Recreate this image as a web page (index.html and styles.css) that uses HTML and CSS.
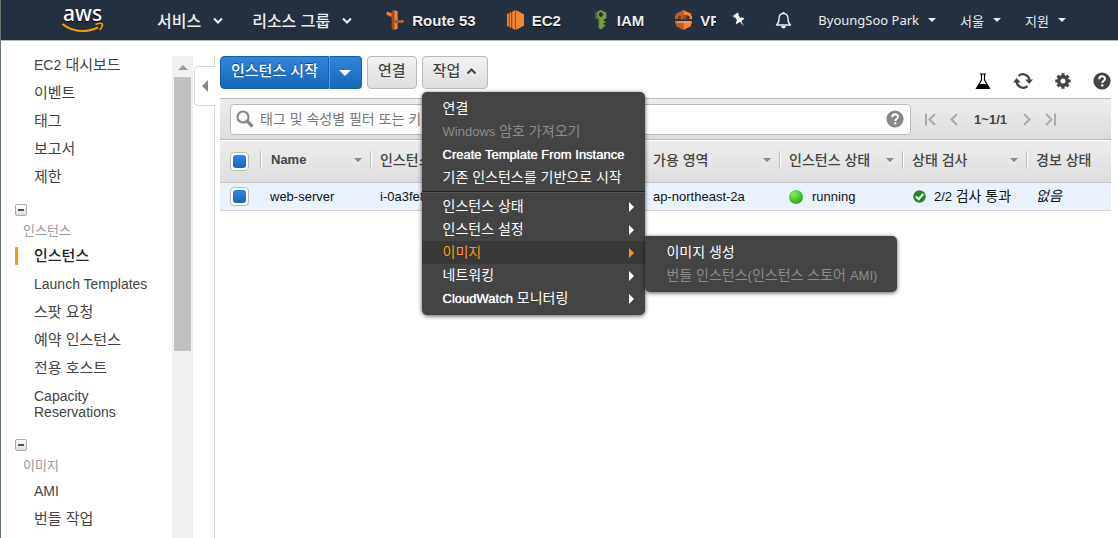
FILE: index.html
```html
<!DOCTYPE html>
<html lang="ko">
<head>
<meta charset="utf-8">
<meta name="viewport" content="width=device-width, initial-scale=1">
<title>EC2 Management Console</title>
<link rel="stylesheet" href="styles.css">
</head>
<body>
<header class="topbar">
  <a class="logo" href="#" aria-label="aws">
    <svg width="44" height="40" viewBox="0 0 44 40">
      <text class="logo-text" x="2" y="21">aws</text>
      <path d="M1.500 24c6 5 12 7 19.500 7 6 0 11-1.200 16-3.600" fill="none" stroke="#f90" stroke-width="2.200"/>
      <path d="M34.500 24.500c3-1.200 6-1.300 6.800-.6 .5 1-.5 4-2.500 6" fill="none" stroke="#f90" stroke-width="1.700"/>
    </svg>
  </a>
  <nav class="main-nav">
    <button class="nav-menu services">서비스 <svg width="10" height="7" viewBox="0 0 10 7"><path d="M1 1.500l4 4 4-4" fill="none" stroke="#eee" stroke-width="2"/></svg></button>
    <button class="nav-menu groups">리소스 그룹 <svg width="10" height="7" viewBox="0 0 10 7"><path d="M1 1.500l4 4 4-4" fill="none" stroke="#eee" stroke-width="2"/></svg></button>
  </nav>
  <nav class="shortcuts">
    <a class="shortcut route" href="#">
      <svg width="18" height="20" viewBox="0 0 54 60"><path d="M17 3l8-3v60l-8-3z" fill="#9d5025"/><path d="M25 0l10 4v52l-10 4z" fill="#f58536"/><path d="M1 6l4-1 12 5v10L5 16l-4-3 2-4z" fill="#f58536"/><path d="M0 13l17 7v2L4 17z" fill="#9d5025"/><path d="M27 30l8 2 16-1 3 4-3 4-16-1-8 2z" fill="#9d5025"/><path d="M35 32l16-1 3 4H35z" fill="#d9732e"/></svg>
      Route 53</a>
    <a class="shortcut ec2" href="#">
      <svg width="17" height="20" viewBox="0 0 51 60"><path d="M0 13l5-3v40l-5-3zM7 9l5-2v46l-5-3zM14 6l9-5v58l-9-5z" fill="#9d5025"/><path d="M0 13l5-3v40l-5-3zM8 8l5-2v48l-5-2zM16 5l8-4v58l-8-4z" fill="#f58536"/><path d="M26 0l25 13v34L26 60z" fill="#f58536"/><path d="M24 1l2-1v60l-2-1z" fill="#9d5025"/></svg>
      EC2</a>
    <a class="shortcut iam" href="#">
      <svg width="12" height="20" viewBox="0 0 36 60"><path fill-rule="evenodd" d="M17 0l17 8v16l-9 6v24l-8 4-6-3V30L1 24V8zM12 9v9l5 3 6-3V9l-6-3z" fill="#759c3e"/><path d="M1 8l6-3v17l6 5v30l-3-2V30l-9-6z" fill="#4b612c"/><path d="M24 32l7 1v5l-7 1zM24 43l6 1v5l-6 1z" fill="#759c3e"/></svg>
      IAM</a>
    <a class="shortcut vpc" href="#">
      <svg width="17" height="20" viewBox="0 0 51 60"><path d="M2 11L25 0v28h-8V17l-8 3v8H0V17h2z" fill="#b8602b"/><path d="M9 20l8-3v11H9z" fill="#7a3c1a"/><path d="M25 0l24 11v6l2 1v10h-8v-9l-8-3-10-2z" fill="#f58536"/><path d="M25 14l10 2v12H25z" fill="#9d5025"/><path d="M35 16l8 3v9h-8z" fill="#5c2f18"/><path d="M0 34h25v26L3 49v-7l-3-2z" fill="#b8602b"/><path d="M25 34h26v6l-3 2v7L25 60z" fill="#f58536"/><path d="M0 34h51l-10 4H10z" fill="#f9a56b"/></svg>
      <span class="clip">VPC</span></a>
  </nav>
  <button class="icon-button pin" aria-label="고정">
    <svg width="14" height="16" viewBox="0 0 14 16"><path transform="rotate(-35 7 8)" d="M3.500 0.500h6v2l-1 .5v3.500c1.800.5 2.800 1.500 2.800 3H7.500l-.8 6-.8-6H1.700c0-1.500 1-2.500 2.800-3V3l-1-.5z" fill="#fff"/></svg>
  </button>
  <button class="icon-button bell" aria-label="알림">
    <svg width="17" height="18" viewBox="0 0 17 18"><path d="M1.500 14c2-1.500 2.500-3 2.500-6 0-3.500 1.500-5.500 4.500-5.500S13 4.500 13 8c0 3 .5 4.500 2.500 6z" fill="none" stroke="#eee" stroke-width="1.400" stroke-linejoin="round"/><path d="M7 2.500a1.500 1.500 0 013 0zM6 15h5q-.5 2.500-2.500 2.500T6 15z" fill="#eee"/></svg>
  </button>
  <button class="account user">ByoungSoo Park <i class="caret"></i></button>
  <button class="account region">서울 <i class="caret"></i></button>
  <button class="account support">지원 <i class="caret"></i></button>
</header>

<div class="page">
  <aside class="sidebar">
    <nav class="side-nav">
      <ul class="side-list">
        <li><a href="#"><span class="latin">EC2</span> 대시보드</a></li>
        <li><a href="#">이벤트</a></li>
        <li><a href="#">태그</a></li>
        <li><a href="#">보고서</a></li>
        <li><a href="#">제한</a></li>
      </ul>
      <section class="side-group">
        <button class="fold" aria-label="인스턴스 접기"></button>
        <h2>인스턴스</h2>
        <ul class="side-list">
          <li class="current"><a href="#">인스턴스</a></li>
          <li><a class="latin" href="#">Launch Templates</a></li>
          <li><a href="#">스팟 요청</a></li>
          <li><a href="#">예약 인스턴스</a></li>
          <li><a href="#">전용 호스트</a></li>
          <li class="two-line"><a class="latin" href="#">Capacity Reservations</a></li>
        </ul>
      </section>
      <section class="side-group">
        <button class="fold" aria-label="이미지 접기"></button>
        <h2>이미지</h2>
        <ul class="side-list">
          <li><a class="latin" href="#">AMI</a></li>
          <li><a href="#">번들 작업</a></li>
        </ul>
      </section>
    </nav>
    <div class="scroll-track"><i class="scroll-up"></i><div class="scroll-thumb"></div></div>
    <div class="divider"><button class="collapse" aria-label="메뉴 접기"><i></i></button></div>
  </aside>

  <main class="content">
    <div class="toolbar">
      <div class="split">
        <button class="primary launch">인스턴스 시작</button><button class="primary more" aria-label="시작 옵션"><i></i></button>
      </div>
      <button class="plain">연결</button>
      <div class="menu-anchor">
        <button class="plain actions" aria-expanded="true">작업 <svg width="11" height="7" viewBox="0 0 11 7"><path d="M1.500 5.500l4-4 4 4" fill="none" stroke="#444" stroke-width="2"/></svg></button>
        <ul class="menu">
          <li><a href="#">연결</a></li>
          <li class="off"><a href="#"><span class="latin">Windows</span> 암호 가져오기</a></li>
          <li><a href="#"><span class="latin">Create Template From Instance</span></a></li>
          <li><a href="#">기존 인스턴스를 기반으로 시작</a></li>
          <li class="line"></li>
          <li class="sub"><a href="#">인스턴스 상태</a></li>
          <li class="sub"><a href="#">인스턴스 설정</a></li>
          <li class="sub open"><a href="#">이미지</a>
            <ul class="menu submenu">
              <li><a href="#">이미지 생성</a></li>
              <li class="off"><a href="#">번들 인스턴스<span class="latin">(</span>인스턴스 스토어 <span class="latin">AMI)</span></a></li>
            </ul>
          </li>
          <li class="sub"><a href="#">네트워킹</a></li>
          <li class="sub"><a href="#"><span class="latin">CloudWatch</span> 모니터링</a></li>
        </ul>
      </div>
      <div class="tools">
        <button class="icon-button" aria-label="실험"><svg width="16" height="17" viewBox="0 0 16 17"><path d="M5 1h6M6.500 1v6L1.500 15.500h13L9.500 7V1" fill="none" stroke="#000" stroke-width="1.200"/><path d="M4 11h8l3 5H1z" fill="#000"/></svg></button>
        <button class="icon-button" aria-label="새로 고침"><svg width="20" height="18" viewBox="0 0 20 18"><path d="M5.500 3.800A6.800 6.800 0 0116.500 8M14.500 14.200A6.800 6.800 0 013.500 10" fill="none" stroke="#444" stroke-width="2.200"/><path d="M0 10.500l3.700-4.500 4 4.500zM12.300 7.500h7.700l-3.800 4.500z" fill="#444"/></svg></button>
        <button class="icon-button" aria-label="설정"><svg width="16" height="16" viewBox="0 0 16 16"><circle cx="8" cy="8" r="4.200" fill="none" stroke="#444" stroke-width="3.400"/><path d="M8 .3v3M8 12.700v3M.3 8h3M12.700 8h3M2.600 2.600l2 2M11.400 11.400l2 2M2.600 13.400l2-2M11.400 4.600l2-2" stroke="#444" stroke-width="3.200"/></svg></button>
        <button class="icon-button" aria-label="도움말"><svg width="18" height="18" viewBox="0 0 18 18"><circle cx="9" cy="9" r="8.600" fill="#444"/><path d="M6.200 7.200c0-3.800 5.800-3.600 5.800-.5 0 2-2.700 2-2.700 4.200" fill="none" stroke="#fff" stroke-width="2"/><path d="M8.200 12.300h2.200v2.100H8.200z" fill="#fff"/></svg></button>
      </div>
    </div>

    <div class="panel">
      <div class="filter">
        <label class="search">
          <svg width="18" height="18" viewBox="0 0 18 18"><circle cx="7" cy="7" r="5.500" fill="none" stroke="#888" stroke-width="2.200"/><path d="M11 11l5.500 5.500" stroke="#888" stroke-width="3.200"/></svg>
          <input type="text" aria-label="검색" placeholder="태그 및 속성별 필터 또는 키워드별 검색">
          <svg width="18" height="18" viewBox="0 0 18 18"><circle cx="9" cy="9" r="8.600" fill="#888"/><path d="M6.200 7.200c0-3.800 5.800-3.600 5.800-.5 0 2-2.700 2-2.700 4.200" fill="none" stroke="#fff" stroke-width="2"/><path d="M8.200 12.300h2.200v2.100H8.200z" fill="#fff"/></svg>
        </label>
        <div class="pager">
          <button aria-label="처음"><svg width="11" height="13" viewBox="0 0 11 13"><path d="M1 .5v12M10 1L4.500 6.500 10 12" fill="none" stroke="#aaa" stroke-width="2"/></svg></button>
          <button aria-label="이전"><svg width="8" height="13" viewBox="0 0 8 13"><path d="M7 1L1.500 6.500 7 12" fill="none" stroke="#aaa" stroke-width="2"/></svg></button>
          <span class="range">1~1/1</span>
          <button aria-label="다음"><svg width="8" height="13" viewBox="0 0 8 13"><path d="M1 1l5.500 5.500L1 12" fill="none" stroke="#aaa" stroke-width="2"/></svg></button>
          <button aria-label="마지막"><svg width="11" height="13" viewBox="0 0 11 13"><path d="M10 .5v12M1 1l5.500 5.500L1 12" fill="none" stroke="#aaa" stroke-width="2"/></svg></button>
        </div>
      </div>
      <table class="grid">
        <colgroup><col class="c-check"><col class="c-name"><col class="c-id"><col class="c-type"><col class="c-zone"><col class="c-state"><col class="c-status"><col></colgroup>
        <thead>
          <tr>
            <th class="check"><input type="checkbox" checked aria-label="모두 선택"></th>
            <th><div class="head latin">Name<i></i></div></th>
            <th><div class="head">인스턴스 ID</div></th>
            <th><div class="head">유형</div></th>
            <th><div class="head">가용 영역<i></i></div></th>
            <th><div class="head">인스턴스 상태<i></i></div></th>
            <th><div class="head">상태 검사<i></i></div></th>
            <th><div class="head">경보 상태</div></th>
          </tr>
        </thead>
        <tbody>
          <tr>
            <td class="check"><input type="checkbox" checked aria-label="web-server 선택"></td>
            <td>web-server</td>
            <td>i-0a3fe8</td>
            <td></td>
            <td>ap-northeast-2a</td>
            <td><div class="state"><i class="running"></i>running</div></td>
            <td><div class="state ok"><svg width="13" height="13" viewBox="0 0 13 13"><circle cx="6.500" cy="6.500" r="6.200" fill="#1f8a1c"/><path d="M3 6.500l2.700 2.700L10.200 4" fill="none" stroke="#fff" stroke-width="2.200"/></svg><span>2/2 <span class="ko">검사 통과</span></span></div></td>
            <td><em class="ko">없음</em></td>
          </tr>
        </tbody>
      </table>
    </div>
  </main>
</div>
</body>
</html>
```

FILE: styles.css
```css
* { box-sizing: border-box; }
html, body { height: 100%; }
body {
  margin: 0;
  display: flex;
  flex-direction: column;
  overflow: hidden;
  border-left: 1px solid #65746c;
  background: #fff;
  color: #444;
  font: 14px "Liberation Sans", "Noto Sans CJK KR", sans-serif;
}
button { margin: 0; padding: 0; border: 0; background: none; color: inherit; font: inherit; white-space: nowrap; }
a { color: inherit; text-decoration: none; }
ul { margin: 0; padding: 0; list-style: none; }
svg { display: block; flex: none; }

/* top bar */
.topbar {
  flex: none;
  display: flex;
  align-items: center;
  height: 41px;
  padding-left: 60px;
  background: #242f3f;
  border-bottom: 1px solid #b5b8bb;
  color: #eee;
  text-shadow: 0 1px 1px #000;
}
.logo { width: 44px; }
.logo-text { font: 500 21px "Noto Sans", sans-serif; fill: #fff; }
.main-nav, .shortcuts { display: flex; align-items: center; }
.nav-menu { display: flex; align-items: center; gap: 12px; font-size: 16px; font-weight: 500; font-family: "Noto Sans CJK KR", sans-serif; }
.services { margin-left: 52px; }
.groups { margin-left: 29px; }
.shortcuts { margin-left: 34px; }
.shortcut { display: flex; align-items: center; gap: 8px; font-size: 15px; font-weight: bold; white-space: nowrap; }
.ec2 { margin-left: 31px; }
.iam { margin-left: 34px; gap: 10px; }
.vpc { margin-left: 31px; }
.clip { width: 16px; overflow: hidden; }
.icon-button { display: block; }
.pin { margin-left: 17px; }
.bell { margin-left: 28px; }
.account { display: flex; align-items: center; gap: 9px; font: 13px "Noto Sans", "Noto Sans CJK KR", sans-serif; }
.user { margin-left: 26px; }
.region, .support { margin-left: 24px; }
.caret { border: 4px solid transparent; border-top-color: #eee; border-bottom: 0; }

/* sidebar */
.page { flex: 1; min-height: 0; display: flex; }
.sidebar { flex: none; display: flex; width: 214px; padding-top: 15px; }
.side-nav { flex: 1; overflow: hidden; }
.side-list { font-size: 15px; line-height: 28px; }
.side-list li { height: 28px; padding-left: 33px; }
.side-list .latin { font-size: 14px; }
.side-nav > .side-list { margin-top: -5px; }
.side-group { margin-top: 13px; }
.side-group + .side-group { margin-top: 12px; }
.fold {
  display: grid;
  place-items: center;
  width: 12px;
  height: 12px;
  margin-left: 14px;
  border: 1px solid #aaa;
  border-radius: 2px;
  background: linear-gradient(#fff, #ddd);
}
.fold::before { content: ""; width: 6px; height: 2px; background: #555; }
.side-group h2 { margin: 4px 0 0 22px; color: #999; font-size: 13px; font-weight: normal; line-height: 22px; }
.side-list .current { display: flex; align-items: center; padding-left: 14px; color: #222; font-weight: 500; }
.current::before { content: ""; width: 3px; height: 18px; margin-right: 16px; border-radius: 1px; background: #f90; }
.side-list .two-line { height: 45px; padding-top: 6px; padding-right: 40px; line-height: 16px; }
.two-line .latin { display: block; }
.scroll-track { flex: none; width: 21px; padding: 9px 2px 0; background: #f1f1f1; }
.scroll-up { display: block; width: 10px; margin: 0 auto 7px; border: 5px solid transparent; border-top: 0; border-bottom-color: #999; }
.scroll-thumb { height: 58%; background: #c1c1c1; }
.divider { flex: none; width: 22px; padding-top: 10px; border-right: 1px solid #d5d5d5; }
.collapse {
  display: grid;
  place-items: center;
  width: 21px;
  height: 40px;
  margin-left: 1px;
  border: 1px solid #d5d5d5;
  border-right: 0;
  border-radius: 5px 0 0 5px;
  background: #fff;
}
.collapse i { border: 6px solid transparent; border-right-color: #888; border-left: 0; }

/* toolbar */
.content { flex: 1; min-width: 0; padding: 15px 7px 0 5px; }
.toolbar { display: flex; gap: 5px; height: 42px; align-items: flex-start; }
.toolbar .primary, .toolbar .plain { height: 33px; font-size: 15px; font-weight: 500; line-height: 28px; padding-bottom: 3px; }
.split { display: flex; }
.primary { border: 1px solid #1a5fae; color: #fff; background: linear-gradient(#2f87dc, #1666bb); text-shadow: 0 -1px 1px #0c4383; }
.launch { padding: 0 10px; border-radius: 4px 0 0 4px; }
.toolbar .more { display: grid; place-items: center; width: 33px; padding: 0; border-left-color: #5c9fe0; border-radius: 0 4px 4px 0; }
.more i { border: 6px solid transparent; border-top-color: #fff; border-bottom: 0; }
.plain { padding: 0 10px; border: 1px solid #bbb; border-radius: 4px; background: linear-gradient(#f3f3f3, #ddd); text-shadow: 0 1px 0 #fff; }
.toolbar .actions { display: flex; align-items: center; gap: 6px; }
.menu-anchor { position: relative; }
.tools { display: flex; align-items: center; gap: 22px; margin-left: auto; padding-top: 16px; }

/* drop-down menus */
.menu {
  position: absolute;
  z-index: 2;
  top: 36px;
  left: 0;
  padding: 5px 0;
  border-radius: 5px;
  background: #444;
  color: #fff;
  line-height: 23px;
  white-space: nowrap;
  box-shadow: 0 1px 4px #000a;
}
.menu li { position: relative; height: 23px; padding: 0 21px; }
.menu .latin { font-size: 13px; text-shadow: 0 0 1px; }
.menu .off { color: #8c8c8c; }
.menu .off .latin { text-shadow: none; }
.menu .line { height: 2px; margin: 2px 0; padding: 0; border-top: 1px solid #222; border-bottom: 1px solid #555; }
.menu .sub { display: flex; align-items: center; justify-content: space-between; padding-right: 11px; }
.sub::after { content: ""; border: 5px solid transparent; border-left-color: #fff; border-right: 0; }
.menu .open { background: #383838; color: #f90; }
.open::after { border-left-color: #f90; }
.menu .submenu { top: -5px; left: 100%; padding: 5px 0; border-radius: 0 5px 5px 5px; }
.submenu li { padding: 0 20px 0 21px; }
.submenu li:first-child { color: #fff; }

/* grid */
.filter {
  display: flex;
  align-items: center;
  gap: 14px;
  height: 42px;
  padding-left: 10px;
  border: solid #bbb;
  border-width: 1px 0;
  background: linear-gradient(#eee, #ddd);
}
.search {
  flex: 1;
  display: flex;
  align-items: center;
  gap: 6px;
  height: 31px;
  padding: 0 6px 0 5px;
  border: 1px solid #bbb;
  border-radius: 4px;
  background: #fff;
}
.search input { flex: 1; min-width: 0; padding: 0; border: 0; outline: 0; background: none; font: 14px "Liberation Sans", "Noto Sans CJK KR", sans-serif; }
.search input::placeholder { color: #777; }
.pager { flex: none; display: flex; align-items: center; gap: 14px; padding-right: 55px; }
.range { margin: 0 2px; font-size: 13px; font-weight: bold; text-align: center; }
.grid { width: 100%; border-collapse: collapse; table-layout: fixed; border-top: 1px solid #fff; }
.c-check { width: 40px; }
.c-name { width: 110px; }
.c-id { width: 150px; }
.c-type { width: 123px; }
.c-zone { width: 136px; }
.c-state { width: 123px; }
.c-status { width: 124px; }
.grid thead tr { height: 42px; background: linear-gradient(#eee, #ddd); }
.grid th { padding: 0 0 3px; border-bottom: 1px solid #c5c5c5; font-weight: 500; text-align: left; }
.head { display: flex; align-items: center; justify-content: space-between; height: 18px; padding: 0 8px 0 9px; border-left: 1px solid #bbb; box-shadow: inset 1px 0 #fff; line-height: 18px; white-space: nowrap; }
.head.latin { padding-left: 10px; font-size: 13px; font-weight: bold; }
.head i { border: 4px solid transparent; border-top-color: #888; border-bottom: 0; }
.grid tbody tr { height: 28px; background: #eaf2fe; color: #111; }
.grid td { padding: 0 0 0 10px; border-bottom: 1px solid #d5d5d5; font-size: 13px; line-height: 18px; white-space: nowrap; }
.grid .check { padding: 0 0 0 10px; line-height: 0; }
.check input {
  appearance: none;
  display: grid;
  place-items: center;
  width: 19px;
  height: 19px;
  margin: 0;
  border: 1px solid #bbb;
  border-radius: 4px;
  background: #fff;
}
.check input:checked::before { content: ""; width: 13px; height: 13px; border-radius: 3px; background: linear-gradient(#2f87dc, #1666bb); }
.ko { font-size: 14px; }
.state { display: flex; align-items: center; gap: 9px; }
.running { width: 14px; height: 14px; border-radius: 50%; background: radial-gradient(circle at 35% 30%, #8eea60, #3fb821 60%, #27900f); }
.ok { gap: 8px; padding-left: 1px; }
```
